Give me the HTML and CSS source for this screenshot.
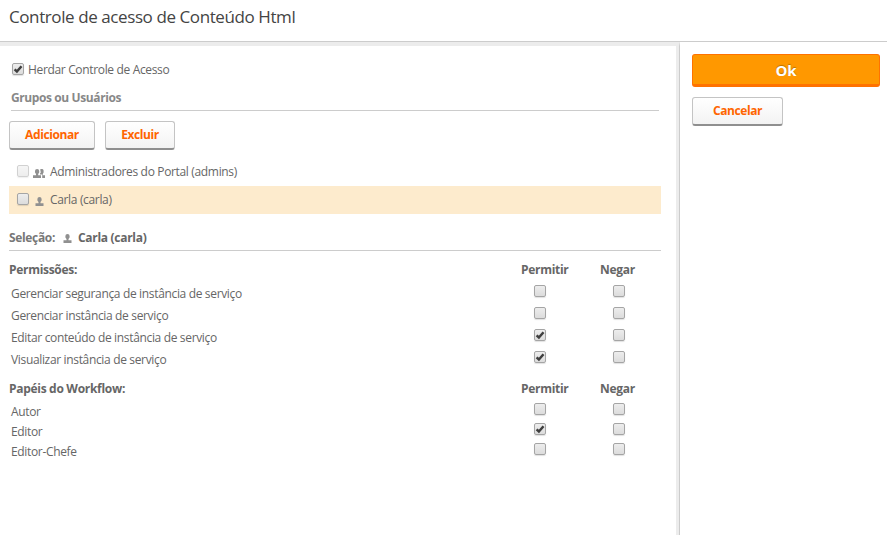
FILE: index.html
```html
<!DOCTYPE html>
<html lang="pt-BR">
<head>
<meta charset="utf-8">
<title>Controle de acesso</title>
<link rel="stylesheet" href="styles.css">
</head>
<body>
<svg class="defs" aria-hidden="true">
  <symbol id="check" viewBox="0 0 12 12"><path d="M2.6 6.3 4.9 8.5 9.5 3.2" fill="none" stroke="#3f3f3f" stroke-width="2.5"/></symbol>
  <symbol id="user" viewBox="0 0 9 9"><path d="M2.4 2a2.1 2 0 0 1 4.2 0v1.4L5.5 5v1.2H8.5V9H.5V6.2h3V5L2.4 3.4z"/></symbol>
  <symbol id="users" viewBox="0 0 13 9"><path d="M2 2a2.1 2 0 0 1 4.2 0v1.4L5.2 5v1.2H8V9H0V6.2h3V5L2 3.4zM7.2.6a1.9 1.9 0 0 1 3.4 1.4v1.5L9.8 5v1.2H12V9H9.2V5.5H7V4.4l.8-1z"/></symbol>
</svg>
<header class="title"><h1>Controle de acesso de Conteúdo Html</h1></header>
<div class="body">
  <main class="panel">
    <label class="inherit"><span class="cb"><svg><use href="#check"/></svg></span><span class="t-inherit">Herdar Controle de Acesso</span></label>
    <h2 class="section">Grupos ou Usuários</h2>
    <div class="actions"><button class="btn add">Adicionar</button><button class="btn del">Excluir</button></div>
    <ul class="members">
      <li><span class="cb faded"></span><svg class="icon wide"><use href="#users"/></svg><span>Administradores do Portal (admins)</span></li>
      <li class="selected"><span class="cb"></span><svg class="icon"><use href="#user"/></svg><span>Carla (carla)</span></li>
    </ul>
    <div class="selection"><span class="muted">Seleção:</span><svg class="icon"><use href="#user"/></svg><b>Carla (carla)</b></div>
    <section class="perms">
      <div class="row head"><b>Permissões:</b><b>Permitir</b><b>Negar</b></div>
      <div class="row"><span>Gerenciar segurança de instância de serviço</span><i class="cb"></i><i class="cb"></i></div>
      <div class="row"><span>Gerenciar instância de serviço</span><i class="cb"></i><i class="cb"></i></div>
      <div class="row"><span>Editar conteúdo de instância de serviço</span><i class="cb"><svg><use href="#check"/></svg></i><i class="cb"></i></div>
      <div class="row"><span>Visualizar instância de serviço</span><i class="cb"><svg><use href="#check"/></svg></i><i class="cb"></i></div>
    </section>
    <section class="perms roles">
      <div class="row head"><b>Papéis do Workflow:</b><b>Permitir</b><b>Negar</b></div>
      <div class="row"><span>Autor</span><i class="cb"></i><i class="cb"></i></div>
      <div class="row"><span>Editor</span><i class="cb"><svg><use href="#check"/></svg></i><i class="cb"></i></div>
      <div class="row"><span>Editor-Chefe</span><i class="cb"></i><i class="cb"></i></div>
    </section>
  </main>
  <aside class="side"><button class="ok">Ok</button><button class="btn cancel">Cancelar</button></aside>
</div>
</body>
</html>
```
FILE: styles.css
```css
* { box-sizing: border-box; }
body { margin: 0; height: 535px; overflow: hidden; background: #fff; color: #666; font: 12px/18px "Open Sans", "Noto Sans", sans-serif; letter-spacing: -0.34px; }
.defs { display: none; }
h1, h2, ul { margin: 0; padding: 0; list-style: none; }
b { letter-spacing: -0.3px; }
.title { height: 42px; padding: 5px 9px 0; border-bottom: 1px solid #ccc; }
h1 { font-size: 17px; line-height: 24px; font-weight: 400; color: #444; letter-spacing: -0.41px; }
.body { display: flex; height: 493px; }
.panel { width: 680px; padding: 0 18px 0 9px; border-top: 4px solid #ececec; border-right: 1px solid #ccc; box-shadow: inset -3px 0 #ececec; }
.cb { position: relative; display: block; flex: none; width: 12px; height: 12px; border: 1px solid #a5a5a5; border-radius: 2px; background: linear-gradient(#ededed, #dcdcdc); box-shadow: 0 1px 1px rgba(0,0,0,.12); }
.cb svg { position: absolute; left: -1px; top: -1px; width: 12px; height: 12px; }
.faded { opacity: .5; }
.inherit { display: flex; align-items: center; height: 18px; margin-top: 14px; padding-left: 3px; gap: 4px; }
.t-inherit { padding-top: 2px; }
.section { height: 22px; margin: 11px 2px 0; line-height: 18px; font-size: 12px; font-weight: 700; color: #888; border-bottom: 1px solid #ccc; letter-spacing: -0.4px; }
.actions { display: flex; gap: 10px; margin-top: 10px; }
button { margin: 0; padding: 0; font: 700 12px/18px "Open Sans", "Noto Sans", sans-serif; letter-spacing: -0.4px; }
.btn { height: 29px; padding-bottom: 1px; border: 1px solid #c4c4c4; border-bottom: 2px solid #8f8f8f; border-radius: 3px; background: linear-gradient(#fff, #f3f3f3); color: #ff6500; }
.add { width: 86px; }
.del { width: 70px; }
.members { margin-top: 8px; }
.members li { display: flex; align-items: center; height: 28px; padding-left: 8px; }
.members .cb { margin-top: -2px; }
.members .selected { background: #fdebcd; }
.icon { flex: none; width: 9px; height: 9px; margin: 2px 6px 0 6px; fill: #909090; }
.icon.wide { width: 13px; margin: 2px 4px 0; }
.selection { display: flex; align-items: center; height: 37px; padding-top: 12px; border-bottom: 1px solid #ccc; }
.selection .icon { margin: 1px 6px 0 8px; }
.muted { color: #777; font-weight: 700; }
.perms { padding-top: 8px; }
.row { display: grid; grid-template-columns: 511px 79px 60px; align-items: center; height: 22px; padding-left: 2px; }
.row .cb { margin: -6px 0 0 12px; }
.row.head { height: 24px; padding-left: 0; }
.row.head b { line-height: 22px; margin: -2px 0 0 1px; }
.row.head b:first-child { margin-left: 0; }
.roles { padding-top: 6px; }
.roles .row { height: 20px; }
.roles .head { height: 25px; }
.side { flex: 1; padding: 12px 7px 0 12px; }
.side button { display: block; }
.ok { width: 188px; height: 33px; border: 1px solid #ff7200; border-bottom-width: 3px; border-radius: 3px; background: #ff9800; color: #fff; font-size: 15px; letter-spacing: -0.2px; text-shadow: 0 -1px 1px rgba(100,70,0,.45); }
.cancel { width: 91px; margin-top: 10px; }
```
